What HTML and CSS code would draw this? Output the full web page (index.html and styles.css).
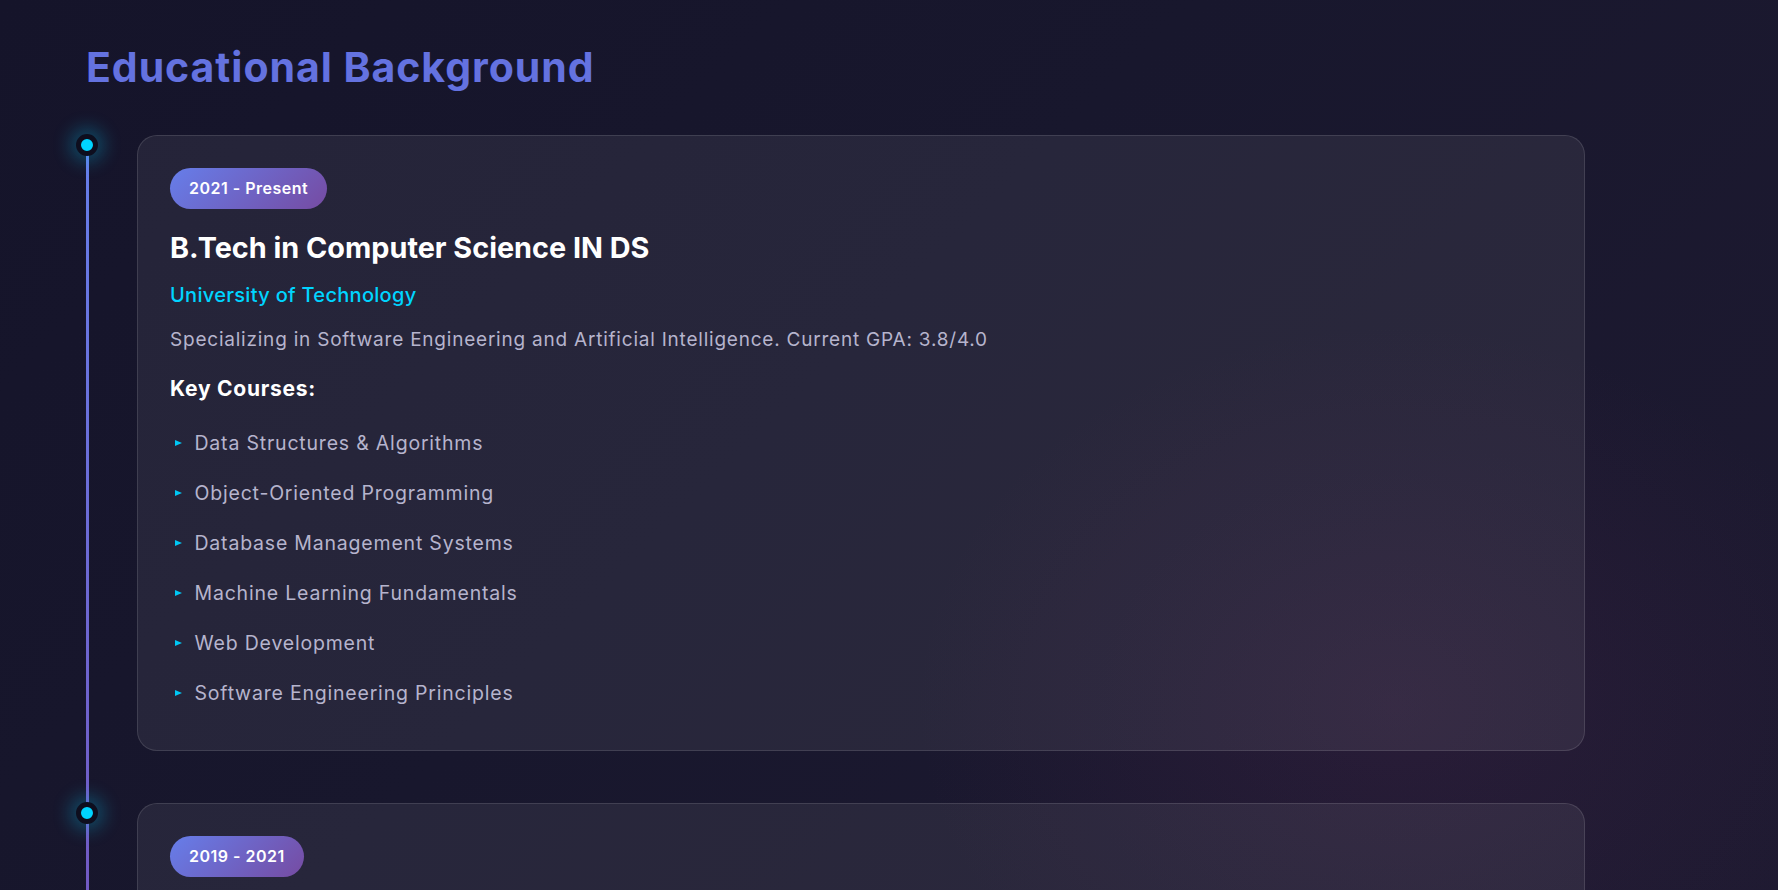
FILE: index.html
```html
<!DOCTYPE html>
<html lang="en">
<head>
<meta charset="utf-8">
<title>Educational Background</title>
<link rel="stylesheet" href="styles.css">
</head>
<body>
<section class="education">
  <h2 class="section-title">Educational Background</h2>
  <div class="timeline">
    <div class="timeline-item">
      <span class="timeline-dot"></span>
      <article class="card">
        <div class="badge-row"><span class="badge">2021 - Present</span></div>
        <h3 class="degree">B.Tech in Computer Science IN DS</h3>
        <p class="school">University of Technology</p>
        <p class="desc">Specializing in Software Engineering and Artificial Intelligence. Current GPA: 3.8/4.0</p>
        <h4 class="courses-title">Key Courses:</h4>
        <ul class="courses">
          <li>Data Structures &amp; Algorithms</li>
          <li>Object-Oriented Programming</li>
          <li>Database Management Systems</li>
          <li>Machine Learning Fundamentals</li>
          <li>Web Development</li>
          <li>Software Engineering Principles</li>
        </ul>
      </article>
    </div>
    <div class="timeline-item">
      <span class="timeline-dot"></span>
      <article class="card">
        <div class="badge-row"><span class="badge">2019 - 2021</span></div>
        <h3 class="degree">Higher Secondary Education</h3>
        <p class="school">City Public School</p>
        <p class="desc">Science stream with Mathematics and Computer Science.</p>
      </article>
    </div>
  </div>
</section>
</body>
</html>
```
FILE: styles.css
```css
* { box-sizing: border-box; }

html, body {
  margin: 0;
  padding: 0;
}

body {
  min-height: 100vh;
  font-family: "Inter", "Liberation Sans", sans-serif;
  color: #ffffff;
  background:
    radial-gradient(ellipse 480px 380px at 1395px 705px, rgba(105, 45, 95, 0.17), rgba(105, 45, 95, 0) 100%),
    linear-gradient(135deg, #15142a 0%, #18172d 45%, #1e1a31 100%);
  background-attachment: fixed;
  overflow: hidden;
}

.education {
  padding: 43px 0 0 86px;
  width: 1585px;
}

.section-title {
  margin: 0 0 44px;
  font-size: 41px;
  line-height: 48px;
  font-weight: 700;
  letter-spacing: 0.95px;
  color: #6472e0;
}

.timeline {
  position: relative;
}

.timeline::before {
  content: "";
  position: absolute;
  left: 0;
  top: 10px;
  bottom: -400px;
  width: 3px;
  background: linear-gradient(180deg, #667eea 0%, #7257c0 60%, #764ba2 100%);
}

.timeline-item {
  position: relative;
  padding-left: 51px;
  margin-bottom: 52px;
}

.timeline-dot {
  position: absolute;
  left: -10px;
  top: -1px;
  width: 22px;
  height: 22px;
  border-radius: 50%;
  background: #00d4ff;
  border: 5px solid #0e0e1e;
  box-shadow: 0 0 18px 6px rgba(0, 212, 255, 0.28);
  z-index: 1;
}

.card {
  border: 1px solid rgba(255, 255, 255, 0.12);
  border-radius: 20px;
  background: rgba(255, 255, 255, 0.065);
  padding: 32px;
}

.badge-row {
  display: flex;
  margin-bottom: 22px;
}

.badge {
  display: inline-block;
  padding: 10px 19px;
  border-radius: 21px;
  font-size: 16px;
  line-height: 21px;
  font-weight: 600;
  letter-spacing: 0.5px;
  color: #ffffff;
  background: linear-gradient(135deg, #667eea 0%, #764ba2 100%);
}

.degree {
  margin: 0 0 17px;
  font-size: 28.8px;
  line-height: 34px;
  font-weight: 700;
  color: #ffffff;
}

.school {
  margin: 0 0 19px;
  font-size: 20px;
  line-height: 26px;
  font-weight: 500;
  letter-spacing: 0.3px;
  color: #00d4ff;
}

.desc {
  margin: 0 0 23px;
  font-size: 19px;
  line-height: 26px;
  letter-spacing: 0.78px;
  color: #b6b4cd;
}

.courses-title {
  margin: 0 0 16px;
  font-size: 21px;
  line-height: 26px;
  font-weight: 700;
  letter-spacing: 0.75px;
  color: #ffffff;
}

.courses {
  list-style: none;
  margin: 0;
  padding: 0;
}

.courses li {
  display: flex;
  align-items: center;
  gap: 13px;
  padding: 11px 0;
  font-size: 19.5px;
  line-height: 28px;
  letter-spacing: 0.8px;
  color: #b6b4cd;
}

.courses li::before {
  content: "";
  flex: none;
  width: 0;
  height: 0;
  margin-left: 4.5px;
  border-top: 3.5px solid transparent;
  border-bottom: 3.5px solid transparent;
  border-left: 7px solid #00c8f5;
}
```
